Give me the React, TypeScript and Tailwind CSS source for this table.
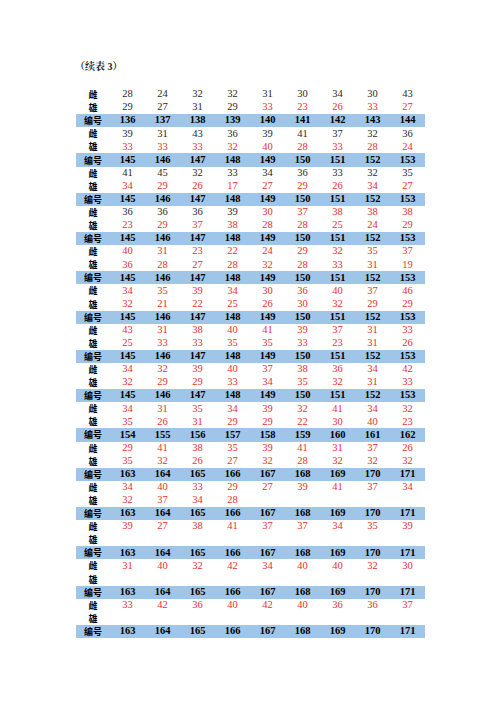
type Cell = { v: string; red?: boolean };

const B = (s: string): Cell[] => s.split(" ").map((v) => ({ v }));
const R = (s: string): Cell[] => s.split(" ").map((v) => ({ v, red: true }));
const E: Cell[] = [];

type Row = { kind: "f" | "m" | "id"; cells: Cell[] };

const ids = (from: number) =>
  Array.from({ length: 9 }, (_, i) => ({ v: String(from + i) }));

const rows: Row[] = [
  { kind: "f", cells: B("28 24 32 32 31 30 34 30 43") },
  { kind: "m", cells: [...B("29 27 31 29"), ...R("33 23 26 33 27")] },
  { kind: "id", cells: ids(136) },
  { kind: "f", cells: B("39 31 43 36 39 41 37 32 36") },
  { kind: "m", cells: R("33 33 33 32 40 28 33 28 24") },
  { kind: "id", cells: ids(145) },
  { kind: "f", cells: B("41 45 32 33 34 36 33 32 35") },
  { kind: "m", cells: R("34 29 26 17 27 29 26 34 27") },
  { kind: "id", cells: ids(145) },
  { kind: "f", cells: [...B("36 36 36 39"), ...R("30 37 38 38 38")] },
  { kind: "m", cells: R("23 29 37 38 28 28 25 24 29") },
  { kind: "id", cells: ids(145) },
  { kind: "f", cells: R("40 31 23 22 24 29 32 35 37") },
  { kind: "m", cells: R("36 28 27 28 32 28 33 31 19") },
  { kind: "id", cells: ids(145) },
  { kind: "f", cells: R("34 35 39 34 30 36 40 37 46") },
  { kind: "m", cells: R("32 21 22 25 26 30 32 29 29") },
  { kind: "id", cells: ids(145) },
  { kind: "f", cells: R("43 31 38 40 41 39 37 31 33") },
  { kind: "m", cells: R("25 33 33 35 35 33 23 31 26") },
  { kind: "id", cells: ids(145) },
  { kind: "f", cells: R("34 32 39 40 37 38 36 34 42") },
  { kind: "m", cells: R("32 29 29 33 34 35 32 31 33") },
  { kind: "id", cells: ids(145) },
  { kind: "f", cells: R("34 31 35 34 39 32 41 34 32") },
  { kind: "m", cells: R("35 26 31 29 29 22 30 40 23") },
  { kind: "id", cells: ids(154) },
  { kind: "f", cells: R("29 41 38 35 39 41 31 37 26") },
  { kind: "m", cells: R("35 32 26 27 32 28 32 32 32") },
  { kind: "id", cells: ids(163) },
  { kind: "f", cells: R("34 40 33 29 27 39 41 37 34") },
  { kind: "m", cells: R("32 37 34 28") },
  { kind: "id", cells: ids(163) },
  { kind: "f", cells: R("39 27 38 41 37 37 34 35 39") },
  { kind: "m", cells: E },
  { kind: "id", cells: ids(163) },
  { kind: "f", cells: R("31 40 32 42 34 40 40 32 30") },
  { kind: "m", cells: E },
  { kind: "id", cells: ids(163) },
  { kind: "f", cells: R("33 42 36 40 42 40 36 36 37") },
  { kind: "m", cells: E },
  { kind: "id", cells: ids(163) },
];

const label = { f: "雌", m: "雄", id: "编号" };

function TableRow({ row }: { row: Row }) {
  const band = row.kind === "id";
  return (
    <div
      className={`grid h-[13.1px] grid-cols-[34px_repeat(9,35px)] items-center leading-none ${
        band ? "bg-[#9fc5e8] font-bold text-black" : ""
      }`}
    >
      <div className="text-center font-[family-name:'Noto_Sans_CJK_SC',sans-serif] text-[9px] font-bold text-black">
        {label[row.kind]}
      </div>
      {Array.from({ length: 9 }, (_, i) => {
        const c = row.cells[i];
        return (
          <div
            key={i}
            className={`text-center text-[10.5px] ${
              band ? "" : c?.red ? "text-[#e8302f]" : "text-[#2a2a2a]"
            }`}
          >
            {c?.v ?? ""}
          </div>
        );
      })}
    </div>
  );
}

export default function App() {
  return (
    <div className="h-[708px] w-[500px] bg-white font-[family-name:'Liberation_Serif',serif]">
      <div className="pl-[75px] pt-[61px] font-[family-name:'Liberation_Serif','Noto_Serif_CJK_SC','Noto_Sans_CJK_SC',serif] text-[10px] font-bold leading-[12px] text-[#222]">
        （续表 3）
      </div>
      <div className="ml-[76px] mt-[15px] w-[349px]">
        {rows.map((r, i) => (
          <TableRow key={i} row={r} />
        ))}
      </div>
    </div>
  );
}
